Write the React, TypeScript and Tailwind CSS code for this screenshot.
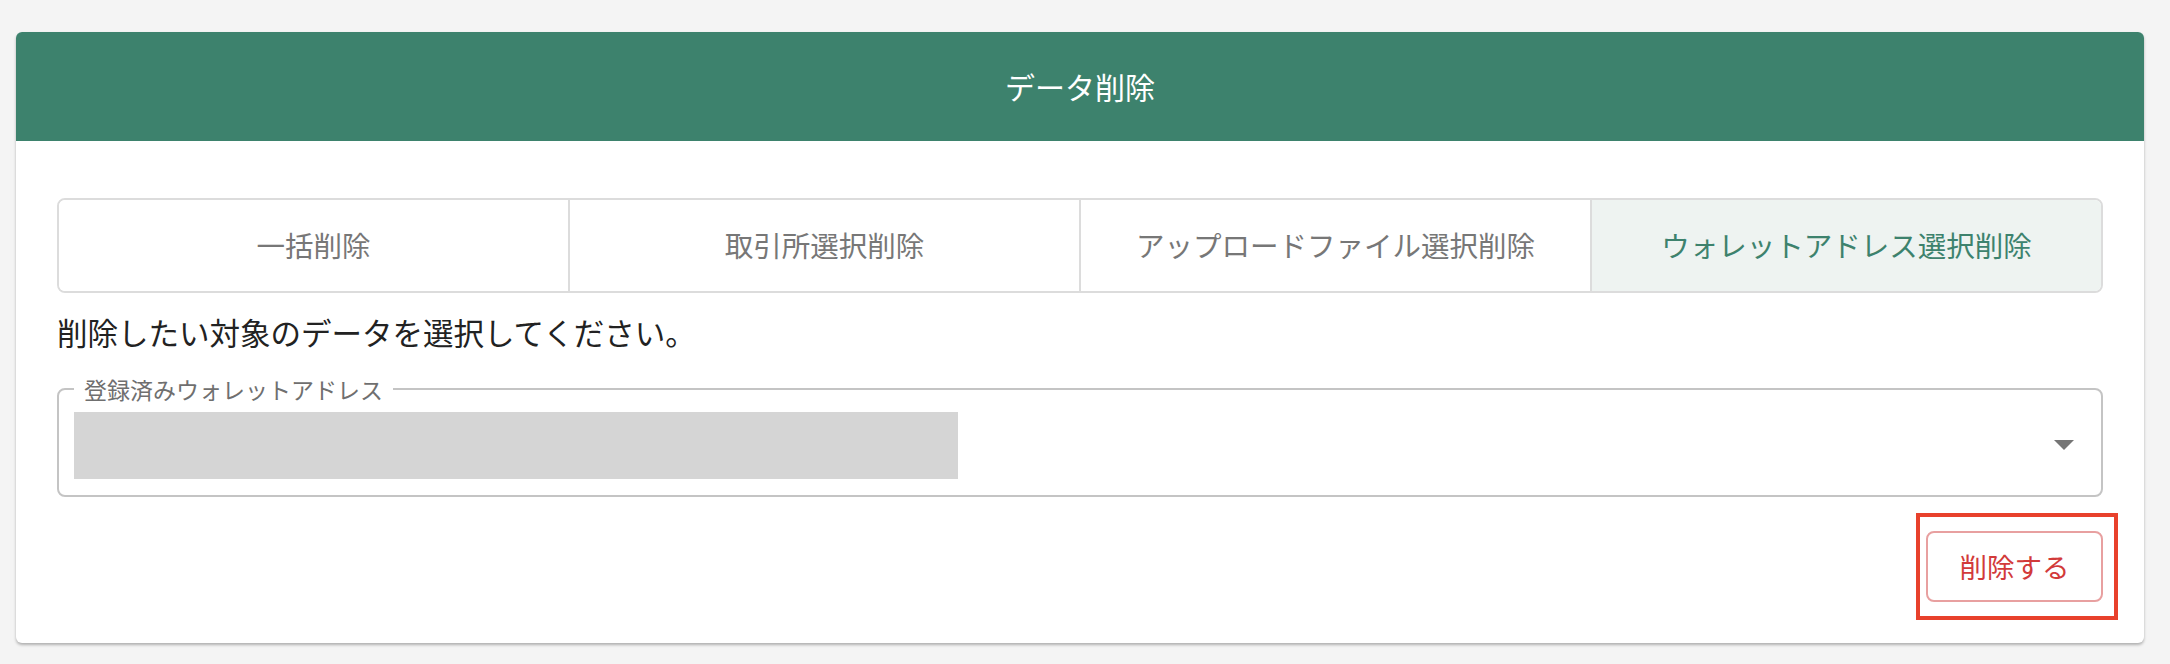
const TABS = ['一括削除', '取引所選択削除', 'アップロードファイル選択削除', 'ウォレットアドレス選択削除'];

const FONT = { fontFamily: '"Noto Sans CJK JP", "Noto Sans", sans-serif' };

function DeleteTabs({ active }: { active: number }) {
  return (
    <div className="flex h-[95px] overflow-hidden rounded-[8px] border-2 border-[#dcdcdc]">
      {TABS.map((label, i) => (
        <button
          key={label}
          type="button"
          className={`flex flex-1 items-center justify-center text-[28.5px] ${
            i > 0 ? 'border-l-2 border-[#dcdcdc]' : ''
          } ${i === active ? 'bg-[#eef3f1] text-[#3d826d]' : 'bg-white text-[#777777]'}`}
        >
          {label}
        </button>
      ))}
    </div>
  );
}

function WalletSelect() {
  return (
    <fieldset className="relative h-[119px] rounded-[8px] border-2 border-[#c4c4c4] px-[15px] pt-0">
      <legend className="px-[10px] text-[23px] leading-[22px] text-[#6f6f6f]">登録済みウォレットアドレス</legend>
      <div className="mt-[12px] h-[67px] w-[884px] bg-[#d5d5d5]" />
      <span className="absolute right-[27px] top-[40px] h-0 w-0 border-x-[10px] border-t-[10px] border-x-transparent border-t-[#757575]" />
    </fieldset>
  );
}

export default function App() {
  return (
    <div className="h-[664px] w-full bg-[#f4f4f4] pl-[16px] pr-[26px] pt-[32px]" style={FONT}>
      <div className="h-[611px] overflow-hidden rounded-[6px] bg-white shadow-[0_2px_3px_rgba(0,0,0,0.28)]">
        <div className="flex h-[109px] items-center justify-center bg-[#3d826d] text-[30px] text-white">データ削除</div>
        <div className="px-[41px] pt-[57px]">
          <DeleteTabs active={3} />
          <p className="mt-[18px] text-[30.5px] leading-[42px] text-[#222222]">削除したい対象のデータを選択してください。</p>
          <div className="mt-[25px]">
            <WalletSelect />
          </div>
          <div className="mt-[34px] flex justify-end">
            <div className="relative">
              <button
                type="button"
                className="flex h-[71px] w-[177px] items-center justify-center rounded-[8px] border-2 border-[#e8a0a0] text-[27.5px] text-[#d23a3a]"
              >
                削除する
              </button>
              <span className="pointer-events-none absolute -bottom-[18px] -left-[10px] -right-[15px] -top-[18px] border-4 border-[#e8412c]" />
            </div>
          </div>
        </div>
      </div>
    </div>
  );
}
